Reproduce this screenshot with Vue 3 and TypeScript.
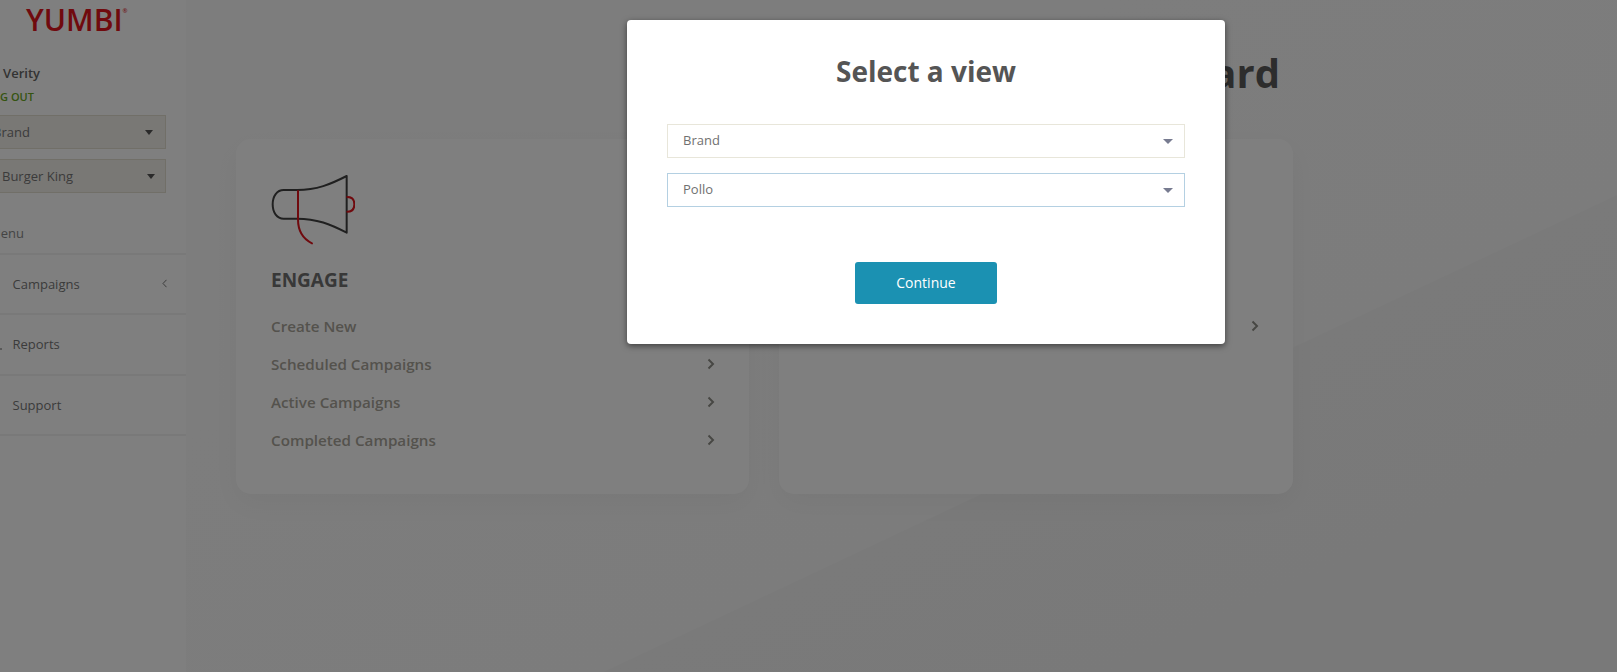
<script setup lang="ts">
const menu: { label: string; chevron?: boolean; mark?: boolean }[] = [
  { label: 'Campaigns', chevron: true },
  { label: 'Reports', mark: true },
  { label: 'Support' },
]
const engage: string[] = ['Create New', 'Scheduled Campaigns', 'Active Campaigns', 'Completed Campaigns']
</script>

<template>
  <div class="page">
    <aside class="sidebar">
      <div class="side-inner">
        <div class="logo">YUMBI<sup class="reg">®</sup></div>
        <div class="user">Eric Verity</div>
        <div class="logout">LOG OUT</div>
        <div class="side-select first"><span>Brand</span><i class="caret"></i></div>
        <div class="side-select second"><span>Burger King</span><i class="caret"></i></div>
        <div class="menu-label">Menu</div>
        <nav class="menu">
          <div v-for="item in menu" :key="item.label" class="menu-row">
            <svg class="menu-icon" width="13" height="13" viewBox="0 0 13 13">
              <path v-if="item.mark" d="M0 11h13" stroke="#666" stroke-width="1" />
            </svg>
            <span class="menu-text">{{ item.label }}</span>
            <svg v-if="item.chevron" class="menu-chev" width="5" height="9" viewBox="0 0 5 9">
              <path d="M4.500 .8 1 4.500l3.500 3.700" fill="none" stroke="#777" stroke-width="1" />
            </svg>
          </div>
        </nav>
      </div>
    </aside>

    <main class="main">
      <header class="head"><h1>Dashboard</h1></header>
      <section class="cards">
        <article class="card first-card">
          <svg class="mega" width="84" height="70" viewBox="122 132 252 210" fill="none" stroke-width="6" stroke-linecap="round" stroke-linejoin="round">
            <path d="M349 135V305C300 280 260 263 200 263H160C140 263 127 245 127 220S140 177 160 177H200C260 177 300 160 349 135Z" stroke="#404040" />
            <path d="M203 180V265C203 300 220 325 245 337" stroke="#e0141c" />
            <path d="M351 198C365 198 372 205 372 220S365 242 351 242" stroke="#e0141c" />
          </svg>
          <h2>ENGAGE</h2>
          <ul class="links">
            <li v-for="link in engage" :key="link">
              <span>{{ link }}</span>
              <svg width="8" height="12" viewBox="0 0 8 12"><path d="M1.500 1.500 6 6l-4.500 4.500" fill="none" stroke="#8f8f88" stroke-width="2" /></svg>
            </li>
          </ul>
        </article>
        <article class="card second-card">
          <div class="links">
            <div class="row-end">
              <svg width="8" height="12" viewBox="0 0 8 12"><path d="M1.500 1.500 6 6l-4.500 4.500" fill="none" stroke="#8f8f88" stroke-width="2" /></svg>
            </div>
          </div>
        </article>
      </section>
    </main>

    <div class="overlay"></div>

    <div class="modal">
      <h3>Select a view</h3>
      <div class="field"><span>Brand</span><i class="caret muted"></i></div>
      <div class="field focus"><span>Pollo</span><i class="caret muted"></i></div>
      <div class="actions"><button class="continue" type="button">Continue</button></div>
    </div>
  </div>
</template>

<style>
html, body { margin: 0; padding: 0; }
</style>

<style scoped>
.page {
  position: relative;
  display: flex;
  width: 1617px;
  height: 672px;
  overflow: hidden;
  font-family: "Open Sans", "Liberation Sans", sans-serif;
  background: #fff;
}
.sidebar {
  flex: 0 0 186px;
  height: 672px;
  overflow: hidden;
  background: #fff;
}
.side-inner {
  width: 220px;
  margin-left: -34px;
}
.logo {
  height: 40px;
  padding-left: 60px;
  font-size: 30px;
  font-weight: 600;
  line-height: 40px;
  color: #e0141c;
  white-space: nowrap;
}
.reg {
  font-size: 6px;
  line-height: 0;
  vertical-align: 18px;
}
.user {
  margin-top: 24px;
  text-align: right;
  width: 74px;
  font-size: 13px;
  font-weight: 600;
  line-height: 18px;
  color: #666;
  white-space: nowrap;
}
.logout {
  margin-top: 7px;
  width: 68px;
  text-align: right;
  font-size: 11px;
  font-weight: 600;
  line-height: 15px;
  color: #6aa81e;
}
.side-select {
  box-sizing: border-box;
  display: flex;
  align-items: center;
  justify-content: space-between;
  width: 176px;
  margin-left: 24px;
  font-size: 13px;
  color: #777;
  background: #f3f0ea;
  border: 1px solid #e2dfd0;
}
.side-select.first { height: 34px; margin-top: 11px; padding: 0 12px 0 2px; }
.side-select.second { height: 34px; margin-top: 10px; padding: 0 10px 0 11px; }
.caret {
  display: block;
  width: 0;
  height: 0;
  border-left: 4.500px solid transparent;
  border-right: 4.500px solid transparent;
  border-top: 5px solid #555;
}
.caret.muted {
  border-left-width: 5px;
  border-right-width: 5px;
  border-top-color: #777b90;
}
.menu-label {
  margin-top: 31px;
  padding-left: 23px;
  height: 19px;
  font-size: 13px;
  line-height: 19px;
  color: #888;
}
.menu { margin-top: 10px; border-top: 2px solid #f2f2f2; }
.menu-row {
  display: flex;
  align-items: center;
  box-sizing: border-box;
  height: 60.300px;
  padding-left: 23px;
  border-bottom: 2px solid #f2f2f2;
  font-size: 13px;
  color: #777;
}
.menu-icon { flex: none; margin-right: 10.500px; }
.menu-text { flex: 1; }
.menu-chev { margin-right: 19px; margin-top: -2px; }
.main {
  flex: 1;
  height: 672px;
  background: linear-gradient(154.800deg, #fbfbfb 0%, #f9f9f9 64.500%, #f4f4f4 64.600%, #f2f2f2 100%);
}
.head {
  display: flex;
  justify-content: flex-end;
  height: 139px;
  padding-right: 337px;
}
h1 {
  margin: 46px 0 0;
  font-size: 40px;
  line-height: 54px;
  font-weight: 700;
  color: #5a5a5a;
}
.cards {
  display: flex;
  gap: 30px;
  padding-left: 50px;
}
.card {
  box-sizing: border-box;
  width: 514px;
  height: 355px;
  padding: 36px 34px 0 35px;
  background: #fff;
  border-radius: 15px;
  box-shadow: 0 10px 28px rgba(0, 0, 0, 0.035);
}
.first-card { width: 513px; }
.second-card { padding-top: 153px; }
.mega { display: block; height: 70px; }
h2 {
  margin: 23px 0 0;
  font-size: 19px;
  line-height: 24px;
  font-weight: 700;
  color: #707070;
}
.links {
  list-style: none;
  margin: 15px 0 0;
  padding: 0;
}
.links li, .row-end {
  display: flex;
  align-items: center;
  justify-content: space-between;
  height: 38px;
  font-size: 15.200px;
  font-weight: 600;
  color: #a9a59a;
}
.row-end { justify-content: flex-end; }
.overlay {
  position: absolute;
  inset: 0;
  background: rgba(0, 0, 0, 0.5);
}
.modal {
  position: absolute;
  left: 627px;
  top: 20px;
  box-sizing: border-box;
  width: 598px;
  height: 324px;
  padding: 31px 40px 0;
  background: #fff;
  border-radius: 4px;
  box-shadow: 0 2px 6px rgba(0, 0, 0, 0.5);
}
h3 {
  margin: 0 0 33px;
  text-align: center;
  font-size: 28px;
  line-height: 40px;
  font-weight: 700;
  color: #555;
}
.field {
  box-sizing: border-box;
  display: flex;
  align-items: center;
  justify-content: space-between;
  width: 518px;
  height: 34px;
  padding: 0 11px 0 15px;
  margin-bottom: 15px;
  font-size: 13px;
  line-height: 30px;
  color: #707070;
  border: 1px solid #e8e6da;
}
.field span { margin-top: -2px; }
.field.focus { border-color: #b4d0e2; }
.actions {
  display: flex;
  justify-content: center;
  margin-top: 55px;
}
.continue {
  width: 142px;
  height: 42px;
  padding: 0 0 2px;
  border: 0;
  border-radius: 3px;
  background: #1b91b2;
  color: #fff;
  font: 400 14px "Open Sans", "Liberation Sans", sans-serif;
}
</style>
